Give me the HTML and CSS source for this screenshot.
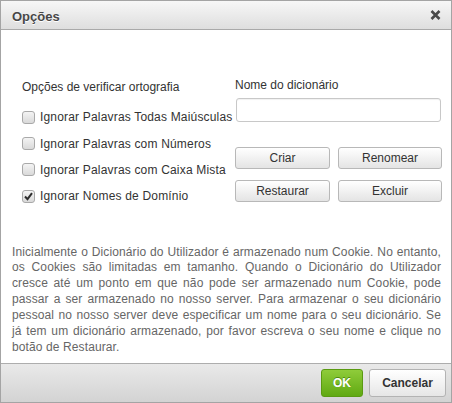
FILE: index.html
```html
<!DOCTYPE html>
<html lang="pt">
<head>
<meta charset="utf-8">
<title>Opções</title>
<link rel="stylesheet" href="styles.css">
</head>
<body>
<div class="dialog">
  <div class="titlebar">
    <span class="title">Opções</span>
    <span class="close" aria-label="Fechar">
      <svg width="11" height="10" viewBox="0 0 11 10"><path d="M1.5 1 L9.5 9 M9.5 1 L1.5 9" stroke="#4a4a4a" stroke-width="2.6" stroke-linecap="butt"/></svg>
    </span>
  </div>
  <div class="content">
    <div class="columns">
      <div class="col-left">
        <div class="heading-left">Opções de verificar ortografia</div>
        <div class="checks">
          <label class="row"><span class="box"></span>Ignorar Palavras Todas Maiúsculas</label>
          <label class="row"><span class="box"></span>Ignorar Palavras com Números</label>
          <label class="row"><span class="box"></span>Ignorar Palavras com Caixa Mista</label>
          <label class="row"><span class="box checked"><svg width="11" height="11" viewBox="0 0 11 11"><path d="M2 5.5 L4.5 8.2 L9 2.2" fill="none" stroke="#2e2e2e" stroke-width="2"/></svg></span>Ignorar Nomes de Domínio</label>
        </div>
      </div>
      <div class="col-right">
        <div class="heading-right">Nome do dicionário</div>
        <div class="input"></div>
        <div class="btn-grid">
          <span class="btn">Criar</span>
          <span class="btn">Renomear</span>
          <span class="btn">Restaurar</span>
          <span class="btn">Excluir</span>
        </div>
      </div>
    </div>
    <p class="info">Inicialmente o Dicionário do Utilizador é armazenado num Cookie. No entanto, os Cookies são limitadas em tamanho. Quando o Dicionário do Utilizador cresce até um ponto em que não pode ser armazenado num Cookie, pode passar a ser armazenado no nosso server. Para armazenar o seu dicionário pessoal no nosso server deve especificar um nome para o seu dicionário. Se já tem um dicionário armazenado, por favor escreva o seu nome e clique no botão de Restaurar.</p>
  </div>
  <div class="footer">
    <span class="fbtn ok">OK</span>
    <span class="fbtn cancel">Cancelar</span>
  </div>
</div>
</body>
</html>
```
FILE: styles.css
```css
html, body {
  margin: 0;
  padding: 0;
  background: #ffffff;
}
body {
  font-family: "Liberation Sans", Arial, sans-serif;
  font-size: 12px;
}
.dialog {
  width: 452px;
  height: 403px;
  box-sizing: border-box;
  border: 1px solid #a4a4a4;
  display: flex;
  flex-direction: column;
  background: #fff;
}
.titlebar {
  height: 29px;
  box-sizing: border-box;
  border-bottom: 1px solid #a9a9a9;
  background: linear-gradient(#f7f7f7, #dedede);
  display: flex;
  align-items: center;
  justify-content: space-between;
  padding: 0 10px 0 11px;
}
.title {
  font-weight: bold;
  font-size: 13px;
  color: #474747;
  text-shadow: 0 1px 0 #fff;
  margin-top: 2px;
}
.close {
  display: flex;
  margin-top: -1px;
}
.content {
  flex: 1;
  display: flex;
  flex-direction: column;
}
.columns {
  display: flex;
  padding: 47px 0 0 21px;
}
.col-left {
  width: 213px;
  color: #333;
}
.heading-left {
  line-height: 16px;
  margin-top: 2px;
}
.checks {
  margin-top: 9px;
  display: flex;
  flex-direction: column;
}
.row {
  height: 26.4px;
  display: flex;
  align-items: center;
  white-space: nowrap;
  letter-spacing: 0.18px;
}
.box {
  width: 11px;
  height: 11px;
  border: 1px solid #a9a9a9;
  border-radius: 3px;
  background: linear-gradient(#f4f4f4, #d9d9d9);
  margin-right: 5px;
  display: flex;
  align-items: center;
  justify-content: center;
  flex: none;
}
.col-right {
  width: 207px;
  color: #333;
}
.heading-right {
  line-height: 16px;
}
.input {
  margin: 5px 1px 0 1px;
  height: 24px;
  box-sizing: border-box;
  border: 1px solid #c8c8c8;
  border-radius: 3px;
  background: #fff;
  box-shadow: inset 0 1px 1px rgba(0,0,0,0.06);
}
.btn-grid {
  margin-top: 25px;
  display: grid;
  grid-template-columns: 95px 104px;
  column-gap: 8px;
  row-gap: 11px;
}
.btn {
  height: 22px;
  box-sizing: border-box;
  border: 1px solid #b8b8b8;
  border-radius: 3px;
  background: linear-gradient(#ffffff, #e4e4e4);
  display: flex;
  align-items: center;
  justify-content: center;
  color: #333;
}
.info {
  margin: 35px 10px 0 11px;
  line-height: 15.9px;
  text-align: justify;
  color: #666;
  letter-spacing: 0.11px;
}
.footer {
  height: 39px;
  box-sizing: border-box;
  border-top: 1px solid #adadad;
  background: linear-gradient(#e9e9e9, #d3d3d3);
  display: flex;
  justify-content: flex-end;
  align-items: flex-start;
  padding: 5px 5px 0 0;
  gap: 6px;
}
.fbtn {
  height: 28px;
  box-sizing: border-box;
  border-radius: 3px;
  display: flex;
  align-items: center;
  justify-content: center;
  font-weight: bold;
  font-size: 12px;
}
.ok {
  width: 42px;
  border: 1px solid #5a9a12;
  background: linear-gradient(#8fcc3a, #60a912);
  color: #fff;
  text-shadow: 0 -1px 0 #4e8a10;
}
.cancel {
  width: 77px;
  border: 1px solid #b3b3b3;
  background: linear-gradient(#ffffff, #e6e6e6);
  color: #333;
}
```
